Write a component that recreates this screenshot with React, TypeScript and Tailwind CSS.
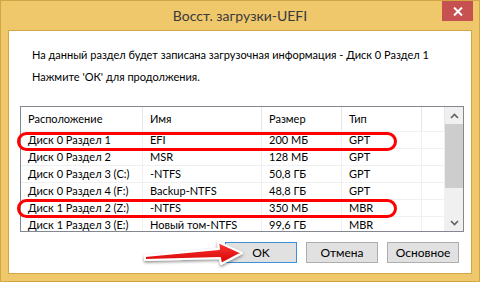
import React from "react";

const rows = [
  ["Диск 0 Раздел 1", "EFI", "200 МБ", "GPT"],
  ["Диск 0 Раздел 2", "MSR", "128 МБ", "GPT"],
  ["Диск 0 Раздел 3 (C:)", "-NTFS", "50,8 ГБ", "GPT"],
  ["Диск 0 Раздел 4 (F:)", "Backup-NTFS", "48,8 ГБ", "GPT"],
  ["Диск 1 Раздел 2 (Z:)", "-NTFS", "350 МБ", "MBR"],
  ["Диск 1 Раздел 3 (E:)", "Новый том-NTFS", "99,6 ГБ", "MBR"],
];

const cols = "grid grid-cols-[122px_119px_80px_80px_1fr]";

function Chevron({ down }: { down?: boolean }) {
  return (
    <svg width="9" height="6" viewBox="0 0 9 6" className={down ? "rotate-180" : ""}>
      <path d="M1 5 L4.5 1.5 L8 5" fill="none" stroke="#606060" strokeWidth="1.6" />
    </svg>
  );
}

function Arrow() {
  return (
    <svg width="112" height="36" viewBox="0 0 112 36" className="absolute left-[136px] top-[234px]">
      <defs>
        <linearGradient id="ar" x1="0" y1="0" x2="0" y2="1">
          <stop offset="0" stopColor="#ff3b3b" />
          <stop offset="1" stopColor="#d40000" />
        </linearGradient>
        <filter id="sh" x="-20%" y="-40%" width="140%" height="180%">
          <feDropShadow dx="0" dy="1.5" stdDeviation="1.6" floodColor="#000" floodOpacity="0.45" />
        </filter>
      </defs>
      <polygon
        points="8,21 82,14 81,7 105,18 84,29 83,23 8,25"
        fill="url(#ar)"
        stroke="#fff"
        strokeWidth="2"
        strokeLinejoin="round"
        filter="url(#sh)"
      />
    </svg>
  );
}

export default function App() {
  return (
    <div
      className="relative flex h-[282px] w-[480px] flex-col border border-[#d2a545] bg-[#f0c86c] text-[11px] text-black"
      style={{ fontFamily: 'Lato, "Liberation Sans", sans-serif' }}
    >
      <div className="flex h-[29px] items-center justify-center text-[14px] text-[#3a3a3a]">
        Восст. загрузки-UEFI
      </div>
      <div className="absolute right-[6px] top-0 flex h-[20px] w-[31px] items-center justify-center bg-[#c75050]">
        <svg width="10" height="9" viewBox="0 0 10 9">
          <path d="M1 0.5 L9 8.5 M9 0.5 L1 8.5" stroke="#fff" strokeWidth="2" />
        </svg>
      </div>

      <div className="mx-[7px] mb-[7px] flex flex-1 flex-col border border-[#d2a545] bg-white">
        <div className="whitespace-nowrap pl-[23px] pt-[13px] leading-[22px]">
          <p>На данный раздел будет записана загрузочная информация - Диск 0 Раздел 1</p>
          <p>Нажмите 'ОК' для продолжения.</p>
        </div>

        <div className="ml-[11px] mt-[18px] flex h-[126px] w-[444px] border border-[#828790]">
          <div className="flex-1 overflow-hidden">
            <div className={`${cols} h-[24px] items-center`}>
              {["Расположение", "Имя", "Размер", "Тип", ""].map((h, i) => (
                <div key={i} className="flex h-full items-center border-r border-[#e5e5e5] pl-[7px]">
                  {h}
                </div>
              ))}
            </div>
            {rows.map((r, i) => (
              <div key={i} className={`${cols} h-[17px] border-t border-[#f0f0f0]`}>
                {[...r, ""].map((c, j) => (
                  <div key={j} className="flex items-center whitespace-nowrap border-r border-[#f0f0f0] pl-[7px] leading-[16px]">
                    {c}
                  </div>
                ))}
              </div>
            ))}
          </div>
          <div className="flex w-[18px] flex-col bg-[#f0f0f0]">
            <div className="flex h-[17px] items-center justify-center">
              <Chevron />
            </div>
            <div className="h-[64px] bg-[#cdcdcd]" />
            <div className="flex-1" />
            <div className="flex h-[17px] items-center justify-center">
              <Chevron down />
            </div>
          </div>
        </div>

        <div className="mr-[12px] mt-[10px] flex justify-end gap-[9px]">
          <button className="h-[21px] w-[72px] border border-[#3c8fd9] bg-[#e1e1e1] text-[12px] leading-none">OK</button>
          <button className="h-[21px] w-[72px] border border-[#adadad] bg-[#e1e1e1] text-[12px] leading-none">Отмена</button>
          <button className="h-[21px] w-[72px] border border-[#adadad] bg-[#e1e1e1] text-[12px] leading-none">Основное</button>
        </div>
      </div>

      <div className="absolute left-[16px] top-[131px] h-[19px] w-[380px] rounded-full border-[3px] border-[#ff0000]" />
      <div className="absolute left-[16px] top-[198px] h-[19px] w-[380px] rounded-full border-[3px] border-[#ff0000]" />
      <Arrow />
    </div>
  );
}
